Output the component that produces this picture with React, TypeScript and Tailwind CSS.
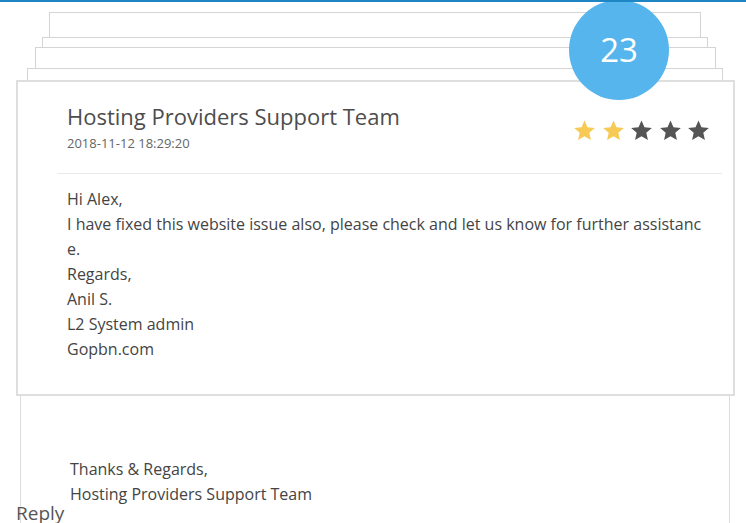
import type { ReactNode } from "react";

const font = { fontFamily: '"Open Sans", "Noto Sans", sans-serif' };

const bodyLines = [
  "Hi Alex,",
  "I have fixed this website issue also, please check and let us know for further assistance.",
  "Regards,",
  "Anil S.",
  "L2 System admin",
  "Gopbn.com",
];

function Star({ filled }: { filled: boolean }) {
  return (
    <svg viewBox="0 0 24 24" className="h-[23px] w-[23px]">
      <polygon
        points="12,1.5 15.1,8.6 22.8,9.3 17,14.4 18.7,22 12,18 5.3,22 7,14.4 1.2,9.3 8.9,8.6"
        fill={filled ? "#f6ca55" : "#555555"}
      />
    </svg>
  );
}

function Layer({ className }: { className: string }) {
  return <div className={`absolute h-[100px] border border-[#d4d4d4] bg-white ${className}`} />;
}

function Block({ children, className }: { children: ReactNode; className?: string }) {
  return <div className={className}>{children}</div>;
}

export default function App() {
  return (
    <div className="relative h-[523px] w-[746px] overflow-hidden bg-white" style={font}>
      <div className="absolute left-0 top-0 z-30 h-[2px] w-full bg-[#1f86c6]" />

      {/* stacked paper behind the ticket */}
      <Layer className="left-[49px] top-[12px] w-[652px]" />
      <Layer className="left-[42px] top-[37px] w-[666px]" />
      <Layer className="left-[35px] top-[47px] w-[681px]" />
      <Layer className="left-[27px] top-[68px] w-[696px]" />

      <div className="absolute left-[569px] top-0 z-20 flex h-[100px] w-[100px] items-center justify-center rounded-full bg-[#56b5ec] text-[33px] text-white">
        23
      </div>

      <div className="relative z-10 ml-[16px] mt-[80px] w-[719px] border-2 border-[#dedede] bg-white">
        <div className="flex justify-between pb-[22px] pl-[49px] pr-[23px] pt-[20px]">
          <div>
            <h2 className="text-[22px] leading-[28px] text-[#4d4d4d]">Hosting Providers Support Team</h2>
            <p className="mt-[5px] text-[13px] leading-[16px] text-[#666]">2018-11-12 18:29:20</p>
          </div>
          <div className="mt-[17px] flex h-[23px] gap-[5.5px]">
            <Star filled />
            <Star filled />
            <Star filled={false} />
            <Star filled={false} />
            <Star filled={false} />
          </div>
        </div>
        <div className="ml-[39px] mr-[11px] h-px bg-[#eaeaea]" />
        <Block className="break-all pb-[32px] pl-[49px] pr-[24px] pt-[13px] text-[16px] leading-[25px] text-[#444]">
          {bodyLines.map((line) => (
            <div key={line}>{line}</div>
          ))}
        </Block>
      </div>

      <div className="ml-[20px] h-[200px] w-[710px] border-x border-[#dcdcdc] bg-white pt-[61px]">
        <div className="pl-[49px] text-[16px] leading-[25px] text-[#444]">
          <div>Thanks &amp; Regards,</div>
          <div>Hosting Providers Support Team</div>
        </div>
        <div className="-ml-[5px] -mt-[5px] text-[19px] leading-[22px] text-[#555]">Reply</div>
      </div>
    </div>
  );
}
